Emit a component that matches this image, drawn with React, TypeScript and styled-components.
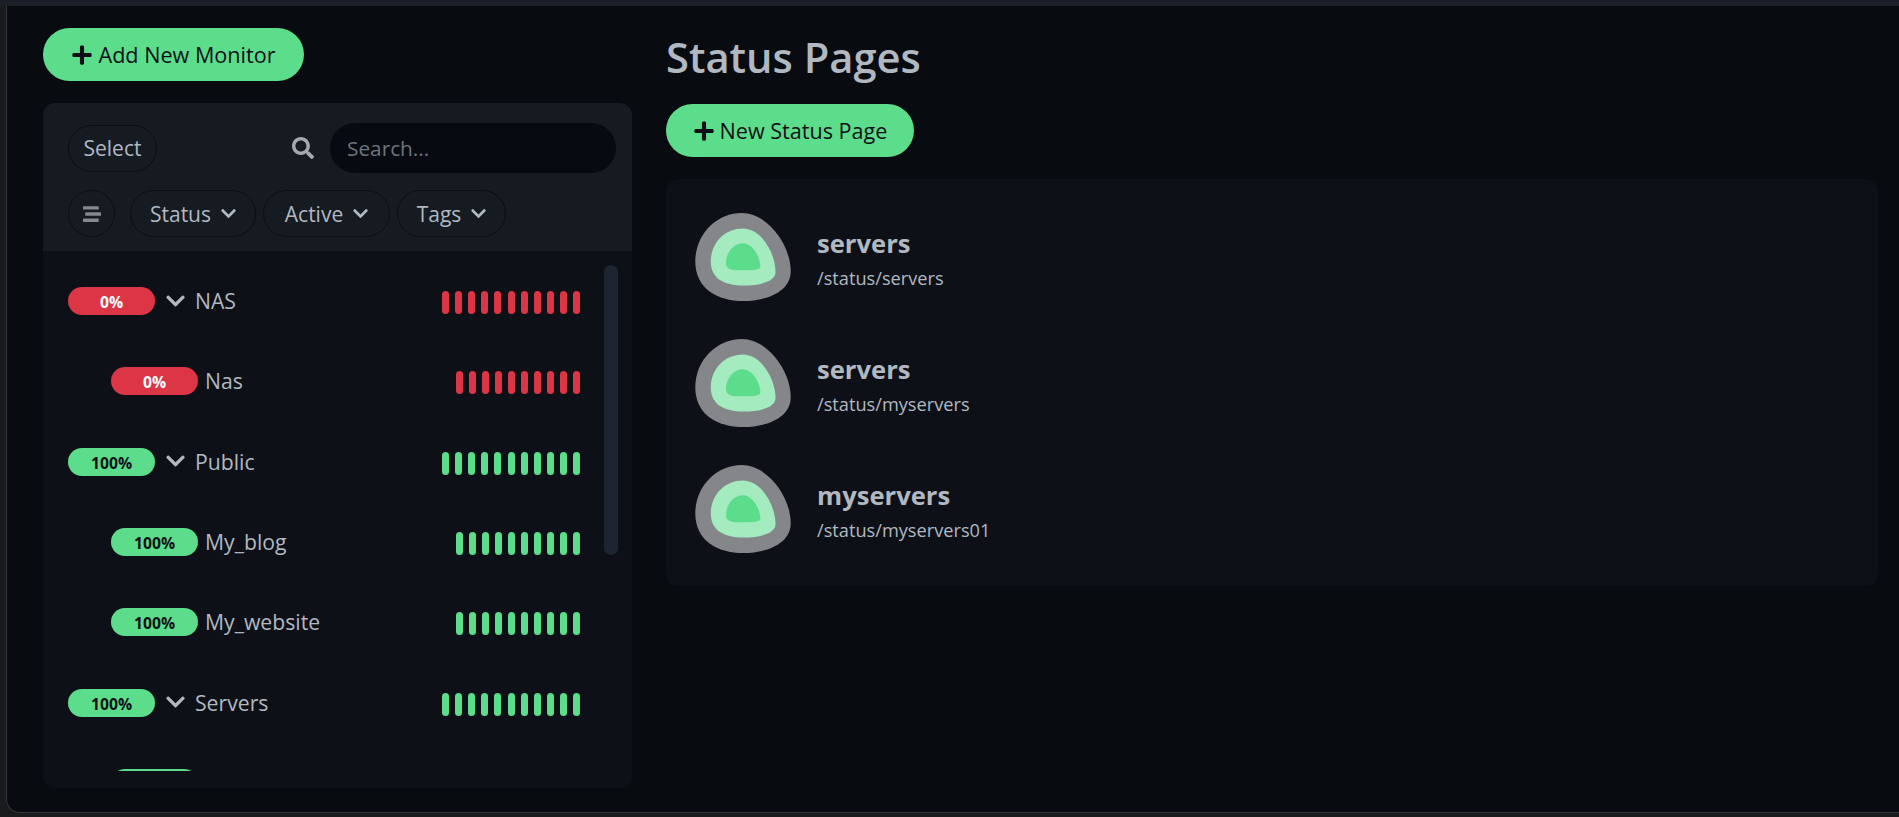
import React from "react"
import styled, { createGlobalStyle } from "styled-components"
import { FaChevronDown, FaPlus, FaSearch, FaStream } from "react-icons/fa"

const GlobalStyle = createGlobalStyle`
  html, body { margin: 0; padding: 0; height: 100%; background: #1a1b1d; }
  body { font-family: "Open Sans", "Noto Sans", sans-serif; overflow: hidden; }
  #root { height: 100%; }
  * { box-sizing: border-box; }
`

const Shell = styled.div`
  height: 100%;
  display: flex;
  flex-direction: column;
`

const TopBar = styled.div`
  height: 6px;
  flex: none;
  background: #1a1f28;
`

const Frame = styled.div`
  flex: 1;
  min-height: 0;
  margin: 0 0 4px 6px;
  padding: 22px 21px 24px 36px;
  display: grid;
  grid-template-columns: 589px 1fr;
  column-gap: 34px;
  background: #080b10;
  border-left: 1px solid #33363a;
  border-bottom: 1px solid #33363a;
  border-bottom-left-radius: 14px;
`

const LeftColumn = styled.div`
  display: flex;
  flex-direction: column;
  min-height: 0;
`

const RightColumn = styled.div`
  display: flex;
  flex-direction: column;
  min-width: 0;
`

const PrimaryButton = styled.button<{ $width: number }>`
  width: ${(p) => p.$width}px;
  height: 53px;
  flex: none;
  display: flex;
  align-items: center;
  justify-content: center;
  gap: 5px;
  padding: 0;
  border: 0;
  border-radius: 27px;
  background: #5cdd8b;
  color: #0d1117;
  font: 400 21.6px "Open Sans", sans-serif;
`

const MonitorPanel = styled.section`
  flex: 1;
  min-height: 0;
  margin-top: 22px;
  display: flex;
  flex-direction: column;
  border-radius: 12px;
  overflow: hidden;
  background: #0d1117;
`

const PanelHeader = styled.div`
  flex: none;
  height: 148px;
  padding: 20px 16px 0 25px;
  display: flex;
  flex-direction: column;
  gap: 17px;
  background: #161b22;
`

const HeaderRow = styled.div`
  display: flex;
  align-items: center;
`

const GhostButton = styled.button<{ $width: number; $gapAfter?: number }>`
  width: ${(p) => p.$width}px;
  height: 47px;
  flex: none;
  display: flex;
  align-items: center;
  justify-content: center;
  gap: 10px;
  padding: 0;
  margin-right: ${(p) => p.$gapAfter ?? 7}px;
  border: 1px solid #0a0e14;
  border-radius: 24px;
  background: transparent;
  color: #b1b8c0;
  font: 400 21px "Open Sans", sans-serif;
`

const SearchIcon = styled(FaSearch)`
  margin-left: auto;
  margin-right: 16px;
  font-size: 22px;
  color: #a4a9af;
`

const SearchBox = styled.div`
  width: 286px;
  height: 50px;
  flex: none;
  display: flex;
  align-items: center;
  padding-left: 17px;
  border-radius: 25px;
  background: #070a10;
  color: #6c757d;
  font-size: 20.8px;
`

const ListArea = styled.div`
  position: relative;
  flex: 1;
  min-height: 0;
  padding-bottom: 17px;
  display: flex;
`

const RowClip = styled.div`
  flex: 1;
  overflow: hidden;
  padding-top: 10px;
`

const Scrollbar = styled.div`
  position: absolute;
  top: 14px;
  left: 561px;
  width: 14px;
  height: 290px;
  border-radius: 7px;
  background: #1c2530;
`

const Row = styled.div<{ $child?: boolean }>`
  height: 80.33px;
  display: flex;
  align-items: center;
  padding: 0 52px 0 ${(p) => (p.$child ? 68 : 25)}px;
  gap: ${(p) => (p.$child ? 7 : 11)}px;
`

const Badge = styled.span<{ $down?: boolean }>`
  width: 87px;
  height: 28px;
  flex: none;
  display: flex;
  align-items: center;
  justify-content: center;
  padding-top: 2px;
  border-radius: 14px;
  background: ${(p) => (p.$down ? "#dc3545" : "#5cdd8b")};
  color: ${(p) => (p.$down ? "#ffffff" : "#0d1117")};
  font-size: 15.7px;
  font-weight: 700;
`

const GroupName = styled.span`
  display: flex;
  align-items: center;
  gap: 10px;
  padding-bottom: 1px;
  color: #b1b8c0;
  font-size: 21.2px;
`

const RowChevron = styled(FaChevronDown)`
  width: 19px;
  height: 22px;
  color: #b4b7bb;
`

const Beats = styled.div<{ $gap: number }>`
  margin-left: auto;
  margin-top: 3px;
  display: flex;
  gap: ${(p) => p.$gap}px;
`

const Beat = styled.span<{ $down?: boolean }>`
  width: 7px;
  height: 23px;
  border-radius: 3.5px;
  background: ${(p) => (p.$down ? "#dc3545" : "#5cdd8b")};
`

const SmallChevron = styled(FaChevronDown)`
  width: 15px;
  height: 17px;
`

const PageTitle = styled.h1`
  margin: 0;
  height: 76px;
  flex: none;
  color: #b1b8c0;
  font-size: 41.7px;
  font-weight: 600;
  line-height: 58px;
`

const PagesCard = styled.section`
  margin-top: 22px;
  height: 407px;
  padding: 34px 29px;
  display: flex;
  flex-direction: column;
  gap: 39px;
  border-radius: 12px;
  background: #0d1117;
`

const PageItem = styled.div`
  height: 87px;
  display: flex;
  align-items: center;
  gap: 26px;
`

const Logo = styled.svg`
  width: 96px;
  height: 88px;
  flex: none;
`

const PageText = styled.div`
  display: flex;
  flex-direction: column;
  gap: 6px;
  padding-top: 6px;
`

const PageName = styled.div`
  color: #b1b8c0;
  font-size: 25.6px;
  font-weight: 700;
  line-height: 30px;
`

const PagePath = styled.div`
  color: #b1b8c0;
  font-size: 18.2px;
  line-height: 26px;
`

type Monitor = { name?: string; up: boolean; group?: boolean }

const monitors: Monitor[] = [
  { name: "NAS", up: false, group: true },
  { name: "Nas", up: false },
  { name: "Public", up: true, group: true },
  { name: "My_blog", up: true },
  { name: "My_website", up: true },
  { name: "Servers", up: true, group: true },
  { up: true },
]

const pages = [
  { name: "servers", path: "/status/servers" },
  { name: "servers", path: "/status/myservers" },
  { name: "myservers", path: "/status/myservers01" },
]

const KumaLogo = () => (
  <Logo viewBox="47 37 283 261">
    <path
      fill="#848689"
      d="M185 37C260 37 330 130 330 210C330 270 260 298 190 298C110 298 47 260 47 180C47 100 110 37 185 37Z"
    />
    <path
      fill="#a4ebc0"
      d="M188 83C245 83 285 160 285 212C285 240 240 252 190 252C130 252 93 230 93 180C93 125 135 83 188 83Z"
    />
    <path
      fill="#5cdd8b"
      d="M188 127C218 127 240 170 240 196C240 207 215 207 190 207C160 207 138 207 138 185C138 155 160 127 188 127Z"
    />
  </Logo>
)

// the last row only peeks out above the fold, so it has no label or beats
const MonitorRow: React.FC<Monitor> = ({ name, up, group }) => (
  <Row $child={!group}>
    <Badge $down={!up}>{name && (up ? "100%" : "0%")}</Badge>
    {name && (
      <>
        <GroupName>
          {group && <RowChevron />}
          {name}
        </GroupName>
        <Beats $gap={group ? 6.1 : 6}>
          {Array.from({ length: group ? 11 : 10 }).map((_, i) => (
            <Beat key={i} $down={!up} />
          ))}
        </Beats>
      </>
    )}
  </Row>
)

const App: React.FC = () => {
  return (
    <Shell>
      <GlobalStyle />
      <TopBar />
      <Frame>
        <LeftColumn>
          <PrimaryButton $width={261}>
            <FaPlus size={22} />
            Add New Monitor
          </PrimaryButton>
          <MonitorPanel>
            <PanelHeader>
              <HeaderRow>
                <GhostButton $width={89}>Select</GhostButton>
                <SearchIcon />
                <SearchBox>Search...</SearchBox>
              </HeaderRow>
              <HeaderRow>
                <GhostButton $width={47} $gapAfter={15}>
                  <FaStream size={18} color="#85888c" />
                </GhostButton>
                <GhostButton $width={126}>
                  Status <SmallChevron />
                </GhostButton>
                <GhostButton $width={127}>
                  Active <SmallChevron />
                </GhostButton>
                <GhostButton $width={109}>
                  Tags <SmallChevron />
                </GhostButton>
              </HeaderRow>
            </PanelHeader>
            <ListArea>
              <RowClip>
                {monitors.map((m, i) => (
                  <MonitorRow key={i} {...m} />
                ))}
              </RowClip>
              <Scrollbar />
            </ListArea>
          </MonitorPanel>
        </LeftColumn>
        <RightColumn>
          <PageTitle>Status Pages</PageTitle>
          <PrimaryButton $width={248}>
            <FaPlus size={22} />
            New Status Page
          </PrimaryButton>
          <PagesCard>
            {pages.map((p) => (
              <PageItem key={p.path}>
                <KumaLogo />
                <PageText>
                  <PageName>{p.name}</PageName>
                  <PagePath>{p.path}</PagePath>
                </PageText>
              </PageItem>
            ))}
          </PagesCard>
        </RightColumn>
      </Frame>
    </Shell>
  )
}

export default App
